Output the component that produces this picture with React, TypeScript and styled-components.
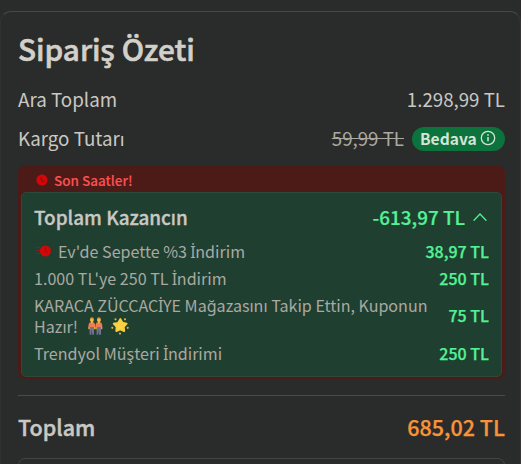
import React from "react";
import styled, { createGlobalStyle } from "styled-components";

const Global = createGlobalStyle`
  *, *::before, *::after { box-sizing: border-box; }
  body {
    margin: 0;
    background: #2a2c2b;
    overflow: hidden;
    font-family: "Noto Sans CJK SC", "Noto Sans", sans-serif;
  }
`;

const Page = styled.main`
  height: 464px;
  padding-top: 11px;
  overflow: hidden;
`;

const Card = styled.section`
  height: 500px;
  border: 1px solid #454847;
  border-right-color: #343636;
  border-left-color: #303232;
  border-radius: 11px;
  padding: 0 15px 0 17px;
`;

const Text = styled.span<{ $size: number; $color: string; $weight?: number; $stroke?: number }>`
  font-size: ${(p) => p.$size}px;
  color: ${(p) => p.$color};
  font-weight: ${(p) => p.$weight ?? 400};
  -webkit-text-stroke: ${(p) => p.$stroke ?? 0}px currentColor;
  line-height: 21px;
  white-space: nowrap;
`;

/* The CJK family has no dotted capital I, so that letter is set in Noto Sans. */
const DottedI = styled.span`
  font-family: "Noto Sans", sans-serif;
  display: inline-block;
  width: 0.29em;
  text-indent: -0.025em;
  line-height: 1;
`;

const Title = styled.h1`
  margin: 0;
  padding-top: 14px;
  height: 67px;
  font-size: 29.7px;
  line-height: 45px;
  font-weight: 500;
  -webkit-text-stroke: 0.6px currentColor;
  color: #d3d0ca;
`;

const Row = styled.div<{ $height: number; $lift?: number }>`
  display: flex;
  align-items: center;
  justify-content: space-between;
  height: ${(p) => p.$height}px;
  padding-bottom: ${(p) => p.$lift ?? 0}px;
`;

const Shipping = styled.div`
  display: flex;
  align-items: center;
  gap: 8px;
`;

const OldPrice = styled(Text)`
  text-decoration: line-through;
  text-decoration-thickness: 1px;
`;

const Pill = styled.div`
  display: flex;
  align-items: center;
  gap: 3px;
  width: 93px;
  height: 24px;
  margin-top: 3px;
  padding: 0 0 1px 8px;
  border-radius: 12px;
  background: #0b733b;
`;

const Offer = styled.div`
  height: 214px;
  margin-top: 7px;
  padding: 0 3px 3px;
  border-radius: 8px;
  background: #4d1b17;
`;

const Deadline = styled.div`
  display: flex;
  align-items: center;
  gap: 6px;
  height: 27px;
  padding: 3px 0 0 15px;
`;

const Savings = styled.div`
  height: 185px;
  border: 1px solid #2d4938;
  border-radius: 5px;
  background: #1f3f31;
  padding: 4px 12px 0;
`;

const Amount = styled.div`
  display: flex;
  align-items: center;
  gap: 8px;
  padding-right: 2px;
`;

const Label = styled.div`
  display: flex;
  align-items: center;
  height: 21px;
`;

const Divider = styled.hr`
  height: 1px;
  border: 0;
  margin: 16px 0 0;
  background: #494b4a;
`;

const NextBox = styled.div`
  height: 50px;
  border: 1px solid #424544;
  border-radius: 7px;
`;

const Icon = styled.svg`
  display: block;
  flex: none;
`;

const light = "#cac8c3";
const muted = "#aaa9a1";
const green = "#54f295";

const ClockIcon = () => (
  <Icon width="12" height="12" viewBox="0 0 12 12">
    <circle cx="6" cy="6" r="5.6" fill="#d10709" />
    <path d="M5.3 3.2v2.7l2.8 2.5" fill="none" stroke="#7d1110" strokeWidth="1.2" />
  </Icon>
);

const FastClockIcon = () => (
  <Icon width="18" height="12" viewBox="0 0 18 12">
    <path d="M1 2.5h5M2 5.5h4M1 8.5h5" stroke="#6e2620" strokeWidth="1" />
    <circle cx="11.4" cy="6" r="5.6" fill="#cf0808" />
    <path d="M11.4 2.8v3.5l2.3 1" fill="none" stroke="#960f0c" strokeWidth="1" />
  </Icon>
);

const InfoIcon = () => (
  <Icon width="16" height="16" viewBox="0 0 16 16" fill="none" stroke="#d5e4d9">
    <circle cx="8" cy="8" r="6.7" strokeWidth="1.3" />
    <path d="M8 7v4.2" strokeWidth="1.5" />
    <circle cx="8" cy="4.9" r=".85" fill="#d5e4d9" stroke="none" />
  </Icon>
);

const Chevron = () => (
  <Icon width="14" height="12" viewBox="0 0 14 12">
    <path d="M1 10.3 7 4l6 6.3" fill="none" stroke={green} strokeWidth="1.3" strokeLinecap="round" />
  </Icon>
);

const Person = ({ x }: { x: number }) => (
  <g transform={`translate(${x} 0)`}>
    <path d="M1.6 9h4.4v8.8H4.2L3.8 12l-.5 5.8H1.6z" fill="#74718f" />
    <path d="M1.5 5.5h4.7l1 2.2v4.5l-1.1-.7V10H1.6v1.5l-1.1.7V7.7z" fill="#f17d4f" />
    <path d="M.5 9.8h1.1v2.5H.5zM6.1 9.8h1.1v2.5H6.1z" fill="#e6ad3d" />
    <path d="M3 4h1.8v2.2H3z" fill="#f2bc45" />
    <circle cx="3.9" cy="2.9" r="2" fill="#f2bc45" />
    <path d="M1.9 2.1Q2 .3 3.9.3T5.9 2.1Q4 .9 1.9 2.1" fill="#d39331" />
  </g>
);

const People = () => (
  <Icon width="15" height="18" viewBox="0 0 15 18">
    <Person x={0} />
    <Person x={7} />
  </Icon>
);

const Star = () => (
  <Icon width="18" height="18" viewBox="0 0 18 18">
    <path
      d="m9.4 2.1 2.1 3.7 4.1.8-2.8 3.2.4 4.2-4-1.6L5.3 14l.3-4.2-2.9-3.1 4.3-.8z"
      fill="#fad345"
      stroke="#f8ce3e"
      strokeWidth="1.9"
      strokeLinejoin="round"
    />
    <g fill="#dfad37">
      <circle cx="4.5" cy="2.3" r="1.1" />
      <circle cx="14" cy="2.3" r="1.1" />
      <circle cx="1.3" cy="10.8" r="1.1" />
      <circle cx="16.7" cy="10.8" r="1.1" />
      <circle cx="9" cy="16.6" r="1.1" />
    </g>
  </Icon>
);

const Emojis = styled.span`
  display: flex;
  gap: 8px;
  margin-left: 10px;
`;

const FastIconSlot = styled.span`
  margin-right: 6px;
`;

const Name = ({ children }: { children: React.ReactNode }) => (
  <Text $size={16.08} $color={muted}>{children}</Text>
);

const Saving = ({ children }: { children: React.ReactNode }) => (
  <Text $size={16} $weight={500} $stroke={0.25} $color={green}>{children}</Text>
);

export default function App() {
  return (
    <>
      <Global />
      <Page>
        <Card>
          <Title>Sipariş Özeti</Title>
          <Row $height={39}>
            <Text $size={18.8} $color={light}>Ara Toplam</Text>
            <Text $size={18.7} $color={light}>1.298,99 TL</Text>
          </Row>
          <Row $height={40} $lift={2}>
            <Text $size={18.8} $color={light}>Kargo Tutarı</Text>
            <Shipping>
              <OldPrice $size={18.7} $color={muted}>59,99 TL</OldPrice>
              <Pill>
                <Text $size={15.6} $weight={700} $color="#d5e4d9">Bedava</Text>
                <InfoIcon />
              </Pill>
            </Shipping>
          </Row>
          <Offer>
            <Deadline>
              <ClockIcon />
              <Text $size={13.5} $weight={500} $stroke={0.1} $color="#fb5153">Son Saatler!</Text>
            </Deadline>
            <Savings>
              <Row $height={40} $lift={2}>
                <Text $size={18.9} $weight={500} $stroke={0.35} $color={light}>Toplam Kazancın</Text>
                <Amount>
                  <Text $size={18.9} $weight={500} $stroke={0.2} $color={green}>-613,97 TL</Text>
                  <Chevron />
                </Amount>
              </Row>
              <Row $height={28}>
                <Label>
                  <FastIconSlot><FastClockIcon /></FastIconSlot>
                  <Name>Ev'de Sepette %3 <DottedI>İ</DottedI>ndirim</Name>
                </Label>
                <Saving>38,97 TL</Saving>
              </Row>
              <Row $height={27}>
                <Name>1.000 TL'ye 250 TL <DottedI>İ</DottedI>ndirim</Name>
                <Saving>250 TL</Saving>
              </Row>
              <Row $height={47}>
                <div>
                  <Label><Name>KARACA ZÜCCAC<DottedI>İ</DottedI>YE Mağazasını Takip Ettin, Kuponun</Name></Label>
                  <Label>
                    <Name>Hazır!</Name>
                    <Emojis><People /><Star /></Emojis>
                  </Label>
                </div>
                <Saving>75 TL</Saving>
              </Row>
              <Row $height={28}>
                <Name>Trendyol Müşteri <DottedI>İ</DottedI>ndirimi</Name>
                <Saving>250 TL</Saving>
              </Row>
            </Savings>
          </Offer>
          <Divider />
          <Row $height={62} $lift={2}>
            <Text $size={21.5} $weight={500} $stroke={0.45} $color={light}>Toplam</Text>
            <Text $size={21.5} $weight={500} $stroke={0.25} $color="#f7943a">685,02 TL</Text>
          </Row>
          <NextBox />
        </Card>
      </Page>
    </>
  );
}
